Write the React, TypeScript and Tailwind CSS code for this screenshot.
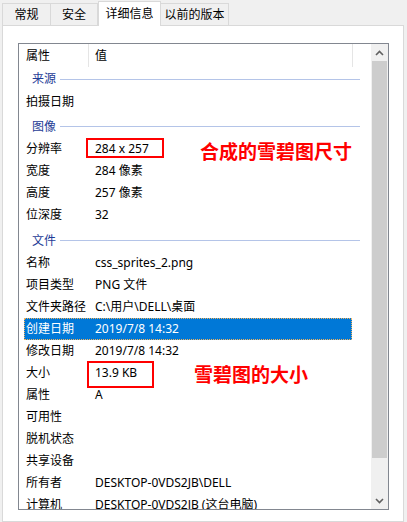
const font = { fontFamily: '"Noto Sans", "Noto Sans CJK SC", sans-serif' };

type Item =
  | { kind: 'group'; label: string; h: string }
  | { kind: 'row'; label: string; value?: string; selected?: boolean };

const items: Item[] = [
  { kind: 'group', label: '来源', h: 'h-[24px]' },
  { kind: 'row', label: '拍摄日期' },
  { kind: 'group', label: '图像', h: 'h-[25px] pt-[2px]' },
  { kind: 'row', label: '分辨率', value: '284 x 257' },
  { kind: 'row', label: '宽度', value: '284 像素' },
  { kind: 'row', label: '高度', value: '257 像素' },
  { kind: 'row', label: '位深度', value: '32' },
  { kind: 'group', label: '文件', h: 'h-[26px] pt-[3px]' },
  { kind: 'row', label: '名称', value: 'css_sprites_2.png' },
  { kind: 'row', label: '项目类型', value: 'PNG 文件' },
  { kind: 'row', label: '文件夹路径', value: 'C:\\用户\\DELL\\桌面' },
  { kind: 'row', label: '创建日期', value: '2019/7/8 14:32', selected: true },
  { kind: 'row', label: '修改日期', value: '2019/7/8 14:32' },
  { kind: 'row', label: '大小', value: '13.9 KB' },
  { kind: 'row', label: '属性', value: 'A' },
  { kind: 'row', label: '可用性' },
  { kind: 'row', label: '脱机状态' },
  { kind: 'row', label: '共享设备' },
  { kind: 'row', label: '所有者', value: 'DESKTOP-0VDS2JB\\DELL' },
  { kind: 'row', label: '计算机', value: 'DESKTOP-0VDS2JB (这台电脑)' },
];

const tabs = [
  { label: '常规', w: 'w-[49px]' },
  { label: '安全', w: 'w-[48px]' },
  { label: '详细信息', w: 'w-[63px]', active: true },
  { label: '以前的版本', w: 'w-[69px]' },
];

function Chevron({ up }: { up?: boolean }) {
  return (
    <svg width="9" height="6" viewBox="0 0 9 6" className={up ? '' : 'rotate-180'}>
      <path d="M1 5 L4.5 1.5 L8 5" fill="none" stroke="#606060" strokeWidth="1.6" />
    </svg>
  );
}

function App() {
  return (
    <div
      className="w-[407px] h-[522px] bg-[#f0f0f0] overflow-hidden flex flex-col text-[12px] text-black"
      style={font}
    >
      {/* tab strip */}
      <div className="flex items-end h-[26px] pl-[2px] relative z-10">
        {tabs.map((t) =>
          t.active ? (
            <div
              key={t.label}
              className={`${t.w} h-[25px] bg-white border border-b-0 border-[#d9d9d9] flex items-center justify-center leading-none pb-[1px]`}
            >
              {t.label}
            </div>
          ) : (
            <div
              key={t.label}
              className={`${t.w} h-[22px] mb-[1px] bg-[#f0f0f0] border border-b-0 border-[#d9d9d9] -ml-px first:ml-0 flex items-center justify-center leading-none`}
            >
              {t.label}
            </div>
          )
        )}
      </div>

      {/* page */}
      <div className="-mt-px ml-[2px] w-[402px] flex-1 bg-white border border-[#d9d9d9] pl-[15px] pt-[17px]">
        <div className="w-[371px] h-[467px] border border-[#828790] flex">
          <div className="w-[352px] relative overflow-hidden">
            {/* header */}
            <div className="h-[23px] flex items-center">
              <div className="w-[69px] h-full pl-[7px] flex items-center">属性</div>
              <div className="w-px h-full bg-[#e5e5e5]" />
              <div className="w-[263px] h-full pl-[6px] flex items-center">值</div>
              <div className="w-px h-full bg-[#e5e5e5]" />
            </div>

            {items.map((it, i) =>
              it.kind === 'group' ? (
                <div key={i} className={`${it.h} flex items-center pl-[13px]`}>
                  <span className="text-[#1e3c96] leading-none">{it.label}</span>
                  <div className="ml-[4px] h-px w-[300px] bg-[#b4c4e8]" />
                </div>
              ) : (
                <div
                  key={i}
                  className={`ml-[5px] w-[328px] h-[22px] flex items-center leading-none ${
                    it.selected ? 'bg-[#0078d7] text-white border border-dotted border-[#f2b25c]' : ''
                  }`}
                >
                  <div
                    className={`${it.selected ? 'w-[70px] pl-px' : 'w-[71px] pl-[2px]'} whitespace-nowrap`}
                  >
                    {it.label}
                  </div>
                  <div className="whitespace-nowrap">{it.value}</div>
                </div>
              )
            )}

            {/* annotations */}
            <div className="absolute left-[67px] top-[94px] w-[78px] h-[20px] border-2 border-[#ff0000]" />
            <div className="absolute left-[181px] top-[96px] text-[19px] leading-[24px] font-bold text-[#ff0000] whitespace-nowrap">
              合成的雪碧图尺寸
            </div>
            <div className="absolute left-[68px] top-[317px] w-[67px] h-[27px] border-2 border-[#ff0000]" />
            <div className="absolute left-[175px] top-[319px] text-[19px] leading-[24px] font-bold text-[#ff0000] whitespace-nowrap">
              雪碧图的大小
            </div>
          </div>

          {/* scrollbar */}
          <div className="w-[17px] bg-[#f0f0f0] flex flex-col">
            <div className="h-[17px] flex items-center justify-center">
              <Chevron up />
            </div>
            <div className="mx-px h-[397px] bg-[#cdcdcd]" />
            <div className="flex-1" />
            <div className="h-[17px] flex items-center justify-center">
              <Chevron />
            </div>
          </div>
        </div>
      </div>
    </div>
  );
}

export default App;
